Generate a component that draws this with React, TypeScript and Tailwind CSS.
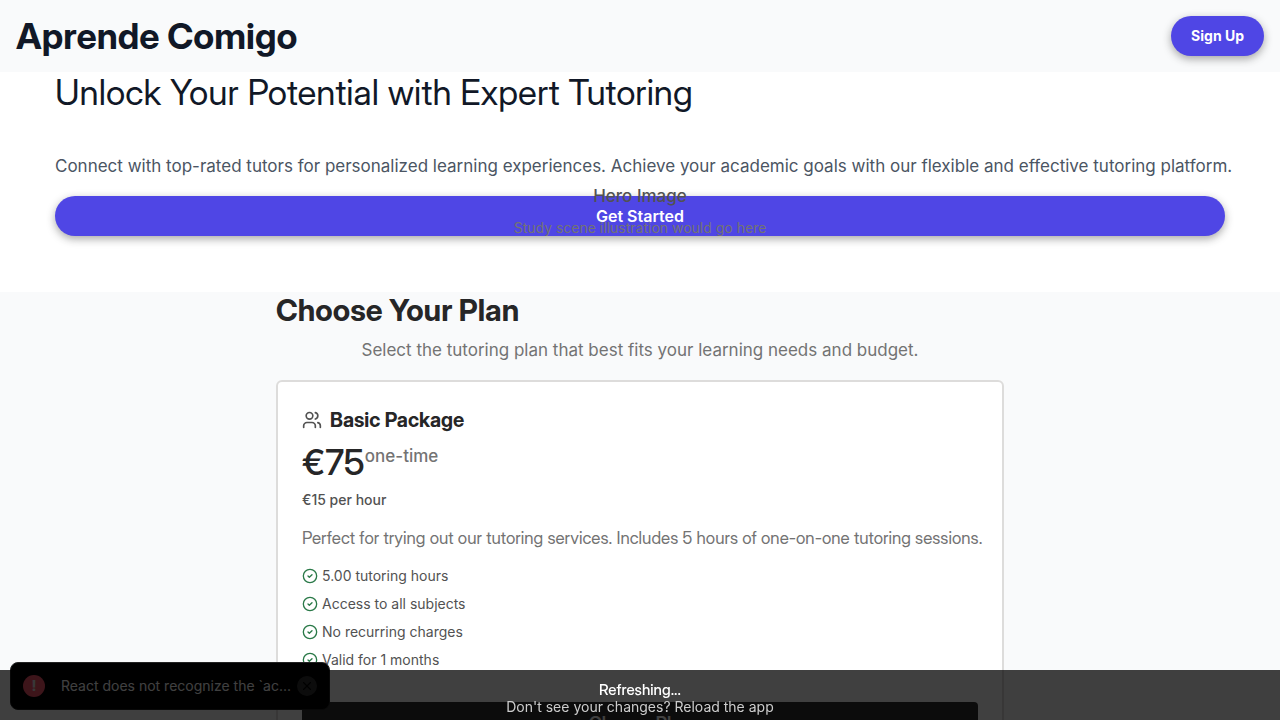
import { CircleCheck, Users, X } from "lucide-react";

const features = [
  "5.00 tutoring hours",
  "Access to all subjects",
  "No recurring charges",
  "Valid for 1 months",
];

function Header() {
  return (
    <header className="flex items-center justify-between bg-[#f9fafb] p-4">
      <span className="font-['Inter_Display','Inter',sans-serif] text-4xl font-bold text-[#111827]">
        Aprende Comigo
      </span>
      <button className="h-10 rounded-full bg-[#4f46e5] px-5 text-sm font-bold text-white shadow-[0_3px_8px_rgba(38,38,38,0.4)]">
        Sign Up
      </button>
    </header>
  );
}

function Hero() {
  return (
    <section className="flex justify-center bg-white pb-14">
      <div className="relative flex w-full max-w-[1170px] flex-col">
        <h1 className="font-['Inter_Display','Inter',sans-serif] text-[35px] leading-10 text-[#111827]">
          Unlock Your Potential with Expert Tutoring
        </h1>
        <p className="mt-10 text-[17px] leading-7 whitespace-nowrap text-[#4b5563]">
          Connect with top-rated tutors for personalized learning experiences.
          Achieve your academic goals with our flexible and effective tutoring
          platform.
        </p>
        <button className="mt-4 h-10 rounded-full bg-[#4f46e5] font-semibold text-white shadow-[0_3px_8px_rgba(38,38,38,0.4)]">
          Get Started
        </button>
        <div className="pointer-events-none absolute inset-x-0 -bottom-0.5 flex flex-col items-center gap-2">
          <span className="text-[17px] leading-7 font-medium text-[#525252]">Hero Image</span>
          <span className="text-sm text-[#737373]">
            Study scene illustration would go here
          </span>
        </div>
      </div>
    </section>
  );
}

function PlanCard() {
  return (
    <article className="mt-4 rounded-md border-2 border-[#dddcdb] bg-white p-6">
      <div className="flex items-center gap-2">
        <Users className="size-5 text-[#525252]" strokeWidth={2} />
        <h3 className="font-['Inter_Display','Inter',sans-serif] text-xl font-bold text-[#262627]">
          Basic Package
        </h3>
      </div>
      <div className="mt-2 flex items-start">
        <span className="font-['Inter_Display','Inter',sans-serif] text-4xl font-medium text-[#262627]">
          €75
        </span>
        <span className="text-[17px] leading-7 font-medium text-[#737373]">one-time</span>
      </div>
      <p className="mt-2 text-sm font-medium text-[#525252]">€15 per hour</p>
      <p className="mt-4 font-['Inter_Display','Inter',sans-serif] text-[17px] leading-6 whitespace-nowrap text-[#737373]">
        Perfect for trying out our tutoring services. Includes 5 hours of
        one-on-one tutoring sessions.
      </p>
      <ul className="mt-4 flex flex-col gap-2">
        {features.map((feature) => (
          <li key={feature} className="flex items-center gap-1">
            <CircleCheck className="size-4 text-[#2a7948]" strokeWidth={2} />
            <span className="text-sm text-[#525252]">{feature}</span>
          </li>
        ))}
      </ul>
      <button className="mt-8 h-11 w-full rounded bg-[#333333] font-['Inter_Display','Inter',sans-serif] text-lg font-semibold text-[#fefeff]">
        Choose Plan
      </button>
    </article>
  );
}

function ErrorToast() {
  return (
    <div className="fixed bottom-2.5 left-2.5 flex h-12 w-80 items-center rounded-lg border border-[#222222] bg-black px-3">
      <span className="flex size-[22px] shrink-0 items-center justify-center rounded-full bg-[#f35369] text-sm font-extrabold text-[#e0e0e0]">
        !
      </span>
      <span className="ml-4 grow text-sm whitespace-nowrap text-white">
        React does not recognize the `ac...
      </span>
      <button
        aria-label="Dismiss"
        className="flex size-5 shrink-0 items-center justify-center rounded-full bg-[#333333] text-black"
      >
        <X className="size-3.5" />
      </button>
    </div>
  );
}

function RefreshBanner() {
  return (
    <div className="fixed inset-x-0 bottom-0 flex h-[50px] flex-col items-center bg-black/75 pt-2.5">
      <span className="font-['Inter_Display','Inter',sans-serif] text-[15px] leading-5 font-medium text-white">
        Refreshing...
      </span>
      <span className="text-sm leading-[14px] text-[#cccccc]">
        Don't see your changes? Reload the app
      </span>
    </div>
  );
}

export default function App() {
  return (
    <div className="h-screen overflow-hidden bg-[#f9fafb] font-['Inter',sans-serif]">
      <Header />
      <Hero />
      <section className="flex justify-center">
        <div className="w-full max-w-[728px]">
          <h2 className="font-['Inter_Display','Inter',sans-serif] text-3xl font-bold text-[#262627]">
            Choose Your Plan
          </h2>
          <p className="mt-2 text-center text-[17px] leading-7 text-[#737373]">
            Select the tutoring plan that best fits your learning needs and budget.
          </p>
          <PlanCard />
        </div>
      </section>
      <ErrorToast />
      <RefreshBanner />
    </div>
  );
}
